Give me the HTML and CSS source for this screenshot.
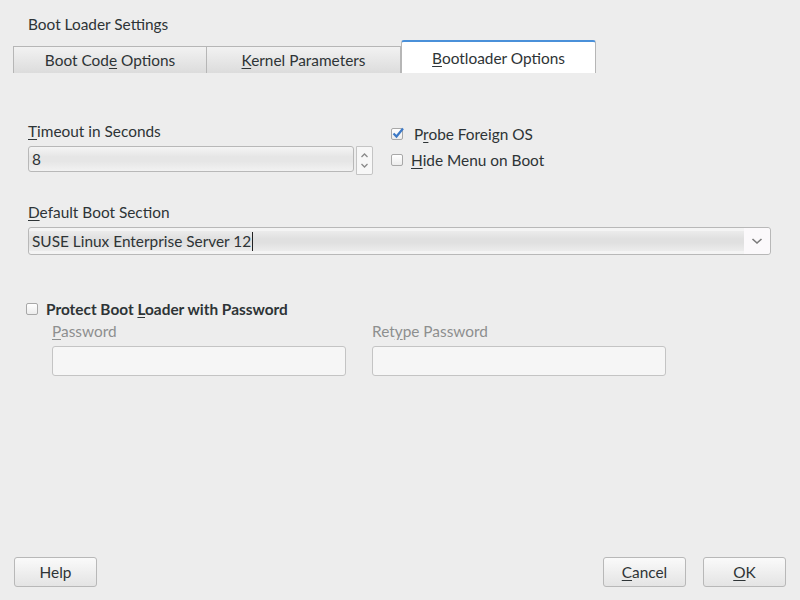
FILE: index.html
```html
<!DOCTYPE html>
<html>
<head>
<meta charset="utf-8">
<link rel="stylesheet" href="styles.css">
</head>
<body>
<div class="window">
  <div class="title">Boot Loader Settings</div>
  <div class="tabs">
    <div class="tab">Boot Cod<u>e</u> Options</div>
    <div class="tab"><u>K</u>ernel Parameters</div>
    <div class="tab active"><u>B</u>ootloader Options</div>
  </div>
  <div class="panel">
    <div class="row1">
      <div class="timeout">
        <div class="label"><u>T</u>imeout in Seconds</div>
        <div class="spin">
          <div class="entry"><span>8</span></div>
          <div class="spinbtns">
            <svg width="15" height="26" viewBox="0 0 15 26"><path d="M4.5 10 L7.5 7 L10.5 10" fill="none" stroke="#8a8a8a" stroke-width="1.3"/><path d="M4.5 17 L7.5 20 L10.5 17" fill="none" stroke="#8a8a8a" stroke-width="1.3"/></svg>
          </div>
        </div>
      </div>
      <div class="checks">
        <div class="check"><span class="box checked"><svg width="14" height="14" viewBox="0 0 14 14"><path d="M2.5 7.5 L5.5 10.5 L12 2.5" fill="none" stroke="#3d79c6" stroke-width="2.2"/></svg></span><span class="ctext wide">P<u>r</u>obe Foreign OS</span></div>
        <div class="check"><span class="box"></span><span class="ctext"><u>H</u>ide Menu on Boot</span></div>
      </div>
    </div>
    <div class="section">
      <div class="label"><u>D</u>efault Boot Section</div>
      <div class="combo">
        <div class="combo-text"><span>SUSE Linux Enterprise Server 12</span><span class="caret"></span></div>
        <div class="combo-btn"><svg width="14" height="10" viewBox="0 0 14 10"><path d="M2.5 3 L7 7 L11.5 3" fill="none" stroke="#7a7a7a" stroke-width="1.6"/></svg></div>
      </div>
    </div>
    <div class="protect">
      <div class="check bold"><span class="box"></span><span>Protect Boot <u>L</u>oader with Password</span></div>
      <div class="pwrow">
        <div class="pwfield">
          <div class="label dim"><u>P</u>assword</div>
          <div class="pwentry"></div>
        </div>
        <div class="pwfield">
          <div class="label dim">Ret<u>y</u>pe Password</div>
          <div class="pwentry"></div>
        </div>
      </div>
    </div>
  </div>
  <div class="buttons">
    <div class="btn">Help</div>
    <div class="spacer"></div>
    <div class="btn"><u>C</u>ancel</div>
    <div class="btn"><u>O</u>K</div>
  </div>
</div>
</body>
</html>
```
FILE: styles.css
```css
html, body {
  margin: 0;
  padding: 0;
  background: #ededed;
}
body {
  font-family: Lato, "Open Sans", "Liberation Sans", sans-serif;
  font-size: 15.4px;
  color: #2e3436;
}
u {
  text-decoration: underline;
  text-underline-offset: 2px;
}
.window {
  height: 600px;
  display: flex;
  flex-direction: column;
}
.title {
  padding: 15px 0 0 28px;
  height: 25px;
  line-height: 18px;
}
.tabs {
  display: flex;
  align-items: flex-end;
  margin-left: 13px;
  height: 33px;
}
.tab {
  width: 192px;
  height: 26px;
  line-height: 26px;
  text-align: center;
  border: 1px solid #b6b6b6;
  border-bottom: none;
  background: linear-gradient(#f2f2f2, #dcdcdc);
}
.tab + .tab {
  border-left: none;
  width: 193px;
}
.tab.active {
  height: 31px;
  line-height: 33px;
  background: #ffffff;
  border: 1px solid #b6b6b6;
  border-top: 2px solid #4a90d9;
  border-bottom: none;
  border-radius: 3px 3px 0 0;
}
.panel {
  flex: 1;
  padding: 49px 28px 0 28px;
}
.label {
  line-height: 18px;
  height: 18px;
}
.label.dim {
  color: #8d8f8f;
}
.row1 {
  display: flex;
}
.timeout {
  width: 345px;
}
.timeout .label {
  margin-bottom: 6px;
}
.spin {
  display: flex;
  align-items: flex-start;
}
.entry {
  width: 324px;
  height: 24px;
  border: 1px solid #b8b8b8;
  border-radius: 3px;
  background: linear-gradient(#f5f5f5, #e6e6e6 40%, #e6e6e6 60%, #f2f2f2);
  display: flex;
  align-items: center;
  padding-left: 3px;
}
.entry span {
  line-height: 18px;
}
.spinbtns {
  margin-left: 2px;
  width: 15px;
  height: 27px;
  border: 1px solid #c4c4c4;
  border-radius: 0 2px 2px 0;
  background: #f7f7f7;
}
.spinbtns svg {
  display: block;
}
.checks {
  margin-left: 18px;
  padding-top: 3px;
  display: flex;
  flex-direction: column;
  gap: 8px;
}
.check {
  display: flex;
  align-items: center;
  line-height: 18px;
}
.box {
  width: 10px;
  height: 10px;
  border: 1px solid #a8a8a8;
  border-radius: 2px;
  background: linear-gradient(#ffffff, #ececec);
  margin-right: 8px;
  position: relative;
}
.ctext.wide {
  margin-left: 3px;
}
.box.checked svg {
  position: absolute;
  left: -1px;
  top: -3px;
}
.check.bold {
  font-weight: bold;
}
.section {
  margin-top: 28px;
}
.section .label {
  margin-bottom: 6px;
}
.combo {
  display: flex;
  height: 26px;
  border: 1px solid #b8b8b8;
  border-radius: 3px;
  background: #f4f4f4;
  margin-right: 1px;
}
.combo-text {
  flex: 1;
  padding-left: 3px;
  display: flex;
  align-items: center;
  background: linear-gradient(#ececec, #e0e0e0 40%, #e0e0e0 60%, #ececec);
  margin: 3px 0 3px 0;
  line-height: 18px;
}
.caret {
  display: inline-block;
  width: 1px;
  height: 19px;
  background: #222;
  margin-left: 1px;
}
.combo-btn {
  width: 26px;
  background: #fbf9fb;
  display: flex;
  align-items: center;
  justify-content: center;
  border-radius: 0 3px 3px 0;
}
.protect {
  margin-top: 45px;
  margin-left: -2px;
}
.pwrow {
  display: flex;
  gap: 26px;
  margin-left: 26px;
  margin-top: 4px;
}
.pwfield .label {
  margin-bottom: 6px;
}
.pwentry {
  width: 292px;
  height: 28px;
  border: 1px solid #c4c4c4;
  border-radius: 3px;
  background: #f6f6f6;
}
.buttons {
  display: flex;
  padding: 0 14px 13px 14px;
  gap: 17px;
}
.spacer {
  flex: 1;
}
.btn {
  width: 81px;
  height: 28px;
  line-height: 28px;
  text-align: center;
  border: 1px solid #b8b8b8;
  border-radius: 3px;
  background: linear-gradient(#fafafa, #e4e4e4);
}
```
